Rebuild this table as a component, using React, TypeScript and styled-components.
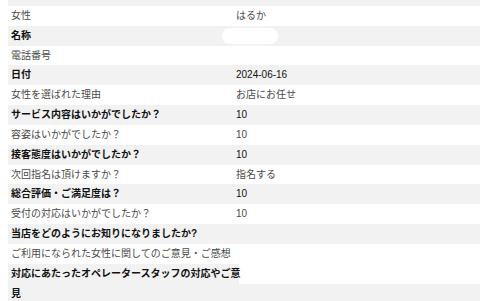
import React from "react";
import styled, { createGlobalStyle } from "styled-components";

const GlobalStyle = createGlobalStyle`
    html, body {
        margin: 0;
        padding: 0;
        background: #ffffff;
        overflow: hidden;
    }
    body {
        padding-left: 8px;
        font-family: "Liberation Sans", "Noto Sans CJK JP", sans-serif;
        font-size: 10px;
    }
`;

const Table = styled.div`
    margin-top: -14px;
    display: flex;
    flex-direction: column;
    width: 472px;
`;

const Row = styled.div<{ $shade: boolean }>`
    display: grid;
    grid-template-columns: 228px 1fr;
    background-color: ${(p) => (p.$shade ? "#f2f2f2" : "#ffffff")};
    color: ${(p) => (p.$shade ? "#111111" : "#4a4a4a")};
    line-height: 19.85px;
`;

const Label = styled.div<{ $bold: boolean }>`
    position: relative;
    z-index: 1;
    padding-left: 3px;
    font-weight: ${(p) => (p.$bold ? 700 : 400)};
    white-space: nowrap;
`;

const Value = styled.div`
    padding-left: 0;
    min-height: 19.85px;
`;

const Masked = styled.span`
    display: inline-block;
    vertical-align: middle;
    width: 56px;
    height: 16px;
    margin: 0 0 0 -14px;
    border-radius: 8px;
    background: #ffffff;
    filter: blur(0.6px);
`;

const Blank = styled.div`
    margin-left: 3px;
    height: 19.85px;
    background: #ffffff;
`;

type Item = { label: React.ReactNode; value?: React.ReactNode };

const items: Item[] = [
    { label: "" },
    { label: "女性", value: "はるか" },
    { label: "名称", value: <Masked /> },
    { label: "電話番号" },
    { label: "日付", value: "2024-06-16" },
    { label: "女性を選ばれた理由", value: "お店にお任せ" },
    { label: "サービス内容はいかがでしたか？", value: "10" },
    { label: "容姿はいかがでしたか？", value: "10" },
    { label: "接客態度はいかがでしたか？", value: "10" },
    { label: "次回指名は頂けますか？", value: "指名する" },
    { label: "総合評価・ご満足度は？", value: "10" },
    { label: "受付の対応はいかがでしたか？", value: "10" },
    { label: "当店をどのようにお知りになりましたか?" },
    { label: "ご利用になられた女性に関してのご意見・ご感想" },
    {
        label: (
            <>
                対応にあたったオペレータースタッフの対応やご意
                <br />見
            </>
        ),
        value: <Blank />,
    },
];

export default function App() {
    return (
        <>
            <GlobalStyle />
            <Table>
                {items.map((item, i) => {
                    const shade = i % 2 === 0;
                    return (
                        <Row key={i} $shade={shade}>
                            <Label $bold={shade}>{item.label}</Label>
                            <Value>{item.value}</Value>
                        </Row>
                    );
                })}
            </Table>
        </>
    );
}
